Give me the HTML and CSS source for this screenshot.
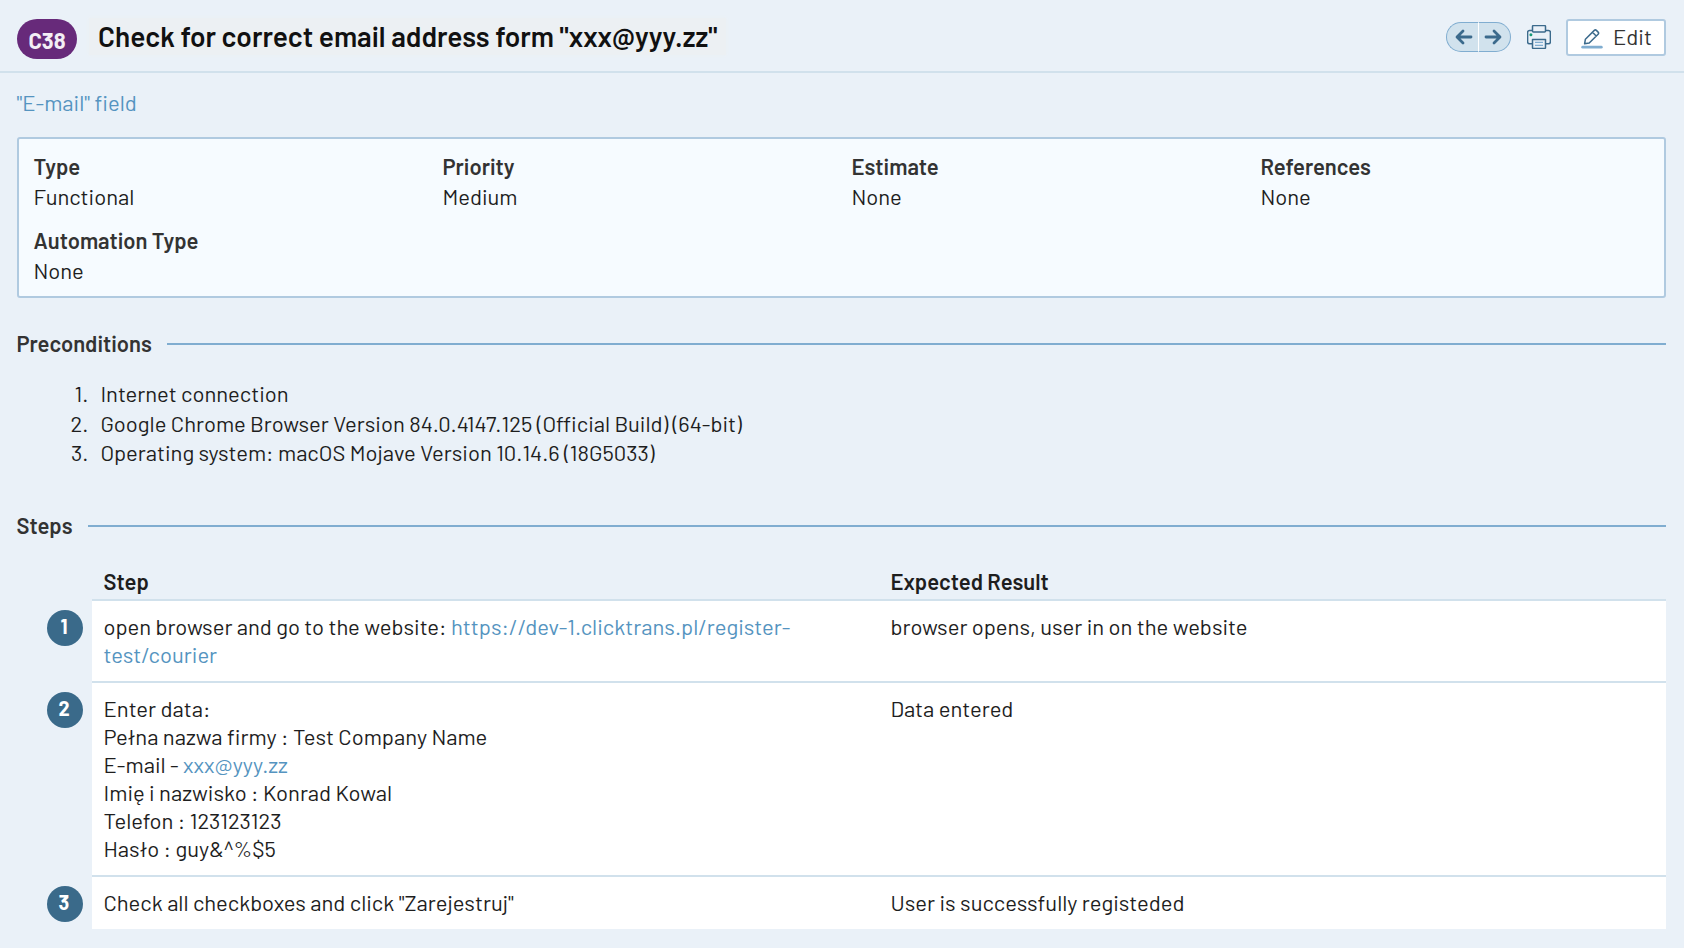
FILE: index.html
```
<!DOCTYPE html>
<html lang="en">
<head>
<meta charset="utf-8">
<title>C38 - Check for correct email address form</title>
<link rel="stylesheet" href="styles.css">
</head>
<body>
<header class="header">
  <span class="badge">C38</span>
  <h1 class="title">Check for correct email address form "xxx@yyy.zz"</h1>
  <div class="actions">
    <div class="pager">
      <a class="pager-prev"><svg width="18" height="16" viewBox="0 0 18 16"><path d="M16 8H2.500M8 2L2 8l6 6"/></svg></a>
      <a class="pager-next"><svg width="18" height="16" viewBox="0 0 18 16"><path d="M2 8h13.500M10 2l6 6-6 6"/></svg></a>
    </div>
    <svg class="printer" width="24" height="24" viewBox="0 0 24 24">
      <path class="line" d="M5.500 18.800H2.600a2 2 0 0 1-2-2V7.500a2 2 0 0 1 2-2h18.800a2 2 0 0 1 2 2v9.300a2 2 0 0 1-2 2h-2.900"/>
      <rect class="line fill" x="5.500" y=".600" width="13" height="6.400" rx="1"/>
      <path class="line fill" d="M5.500 14.500h13v8a1 1 0 0 1-1 1h-11a1 1 0 0 1-1-1z"/>
      <path class="rule" d="M8 17.300h8M8 20.300h8"/>
      <circle class="light" cx="3.900" cy="9.800" r="1.500"/>
    </svg>
    <a class="edit">
      <svg width="22" height="20" viewBox="0 0 22 20">
        <path class="line" d="M3.600 14.800l.8-4.600L13.300 1.400a1.500 1.500 0 0 1 2.100 0l1.700 1.700a1.500 1.500 0 0 1 0 2.100L8.200 14zM11.500 3.200l3.700 3.800"/>
        <path class="base" d="M1.700 18.200h18.600"/>
      </svg>
      <span>Edit</span>
    </a>
  </div>
</header>
<main class="main">
  <a class="link section-link">"E-mail" field</a>
  <section class="info">
    <div class="field"><b>Type</b><span>Functional</span></div>
    <div class="field"><b>Priority</b><span>Medium</span></div>
    <div class="field"><b>Estimate</b><span>None</span></div>
    <div class="field"><b>References</b><span>None</span></div>
    <div class="field"><b>Automation Type</b><span>None</span></div>
  </section>
  <h2 class="heading">Preconditions</h2>
  <ol class="preconditions">
    <li><i>1.</i><span>Internet connection</span></li>
    <li><i>2.</i><span>Google Chrome Browser Version 84.0.4147.125 (Official Build) (64-bit)</span></li>
    <li><i>3.</i><span>Operating system: macOS Mojave Version 10.14.6 (18G5033)</span></li>
  </ol>
  <h2 class="heading">Steps</h2>
  <div class="steps">
    <div class="steps-head"><b>Step</b><b>Expected Result</b></div>
    <div class="step">
      <span class="number">1</span>
      <div>open browser and go to the website: <a class="link">https://dev-1.clicktrans.pl/register-<br>test/courier</a></div>
      <div>browser opens, user in on the website</div>
    </div>
    <div class="step">
      <span class="number">2</span>
      <div>
        <p>Enter data:</p>
        <p>Pełna nazwa firmy : Test Company Name</p>
        <p>E-mail - <a class="link">xxx@yyy.zz</a></p>
        <p>Imię i nazwisko : Konrad Kowal</p>
        <p>Telefon : 123123123</p>
        <p>Hasło : guy&amp;^%$5</p>
      </div>
      <div>Data entered</div>
    </div>
    <div class="step">
      <span class="number">3</span>
      <div>Check all checkboxes and click "Zarejestruj"</div>
      <div>User is successfully registeded</div>
    </div>
  </div>
</main>
</body>
</html>
```
FILE: styles.css
```
* { box-sizing: border-box; }
body {
  margin: 0;
  min-height: 948px;
  background: #eaf1f8;
  color: #1e1e1e;
  font: 22px/28px Barlow, Roboto, "Liberation Sans", sans-serif;
}
h1, h2, p, ol { margin: 0; padding: 0; }
b { font-weight: 600; }
.link { color: #5594c0; }

.header {
  display: flex;
  align-items: flex-start;
  height: 73px;
  padding: 18px 18px 0 17px;
  border-bottom: 2px solid #d1e1ec;
}
.badge {
  width: 60px;
  height: 40px;
  margin-top: 1px;
  border-radius: 20px;
  background: #672a7a;
  color: #f3eef5;
  font-weight: 700;
  line-height: 42px;
  text-align: center;
}
.title {
  height: 37px;
  margin-left: 12px;
  padding: 0 9px;
  background: #ecf0f3;
  box-shadow: 0 0 4px #ecf0f3;
  color: #111;
  font-size: 28px;
  font-weight: 600;
  line-height: 36px;
  white-space: nowrap;
}
.actions { display: flex; margin-left: auto; }
.pager { display: flex; width: 65px; height: 30px; margin-top: 4px; }
.pager a {
  display: flex;
  align-items: center;
  border: 1px solid #80add0;
  background: #d1e2ed;
}
.pager .pager-prev { width: 33px; padding-left: 8px; border-right: 1px solid #fff; border-radius: 15px 0 0 15px; }
.pager .pager-next { width: 32px; padding-left: 5px; border-left: 0; border-radius: 0 15px 15px 0; }
.pager path { fill: none; stroke: #3b6a8c; stroke-width: 2.800; stroke-linecap: round; stroke-linejoin: round; }
.printer { margin: 7px 0 0 16px; }
.line { fill: none; stroke: #3b6a8c; stroke-width: 1.500; stroke-linejoin: round; }
.fill { fill: #eaf1f8; }
.rule { stroke: #80add0; stroke-width: 1.200; }
.light { fill: #169a78; }
.edit {
  display: flex;
  align-items: center;
  width: 100px;
  height: 37px;
  margin: 1px 0 0 15px;
  padding-left: 13px;
  border: 2px solid #b0cae0;
  border-radius: 3px;
  background: #fff;
  color: #333;
}
.edit span { margin-left: 10px; padding-bottom: 4px; }
.edit svg { margin-top: 2px; }
.base { stroke: #80add0; stroke-width: 2.800; stroke-linecap: round; }

.main { padding: 15px 18px 0 16.400px; }
.section-link { display: block; height: 49px; }
.info {
  display: grid;
  grid-template-columns: repeat(4, 409px);
  row-gap: 14px;
  height: 161px;
  margin-left: .6px;
  padding: 12px 0 0 14.500px;
  border: 2px solid #b0cae0;
  border-radius: 3px;
  background: #f6fbff;
  line-height: 30px;
  align-content: start;
  overflow: hidden;
}
.field b, .field span { display: block; }
.field b { color: #333; }
.heading {
  display: flex;
  align-items: center;
  gap: 15px;
  height: 30px;
  margin-top: 30px;
  color: #333;
  font-size: 22px;
  font-weight: 600;
  line-height: 30px;
}
.heading::after { content: ""; flex: 1; height: 2px; margin-top: 2px; background: #80add0; }
.preconditions { margin-top: 21px; list-style: none; line-height: 29.500px; }
.preconditions li { display: flex; gap: 12px; }
.preconditions i { width: 72px; font-style: normal; text-align: right; }
.preconditions + .heading { margin-top: 42px; }

.steps { margin: 27px 0 0 75.600px; }
.steps-head, .step { display: grid; grid-template-columns: 787px 1fr; }
.steps-head { height: 32px; padding: 0 0 0 11.500px; }
.step {
  position: relative;
  padding: 11px 0 13px 11.500px;
  border-top: 2px solid #d1e1ec;
  background: #fff;
}
.number {
  position: absolute;
  left: -45px;
  top: 9px;
  width: 36px;
  height: 36px;
  padding-right: 2px;
  border-radius: 50%;
  background: #3a6a8a;
  color: #fff;
  font-size: 20px;
  font-weight: 700;
  line-height: 32px;
  text-align: center;
}
```
